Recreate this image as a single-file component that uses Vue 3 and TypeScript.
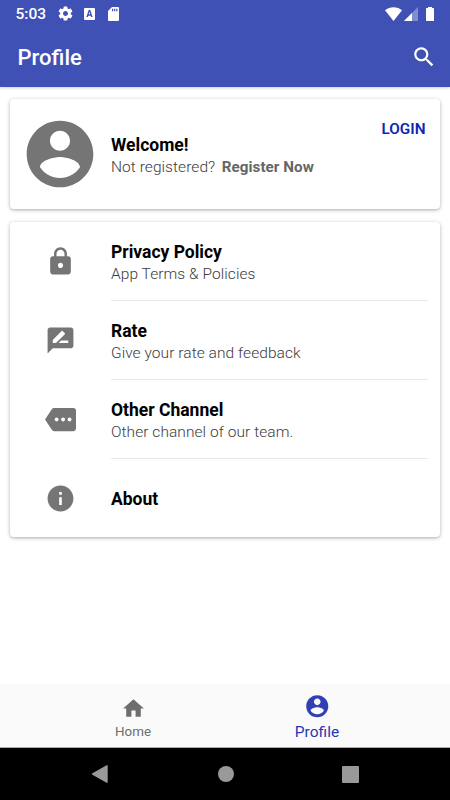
<script setup lang="ts">
interface MenuItem {
  title: string
  subtitle?: string
  icon: string
}

const account =
  'M12 2C6.48 2 2 6.48 2 12s4.48 10 10 10 10-4.48 10-10S17.52 2 12 2zm0 3c1.66 0 3 1.34 3 3s-1.34 3-3 3-3-1.34-3-3 1.34-3 3-3zm0 14.2c-2.5 0-4.71-1.28-6-3.22.03-1.99 4-3.08 6-3.08 1.99 0 5.97 1.09 6 3.08-1.29 1.94-3.5 3.22-6 3.22z'

const items: MenuItem[] = [
  {
    title: 'Privacy Policy',
    subtitle: 'App Terms & Policies',
    icon: 'M18 8h-1V6c0-2.76-2.24-5-5-5S7 3.24 7 6v2H6c-1.1 0-2 .9-2 2v10c0 1.1.9 2 2 2h12c1.1 0 2-.9 2-2V10c0-1.1-.9-2-2-2zm-6 9c-1.1 0-2-.9-2-2s.9-2 2-2 2 .9 2 2-.9 2-2 2zm3.1-9H8.9V6c0-1.71 1.39-3.1 3.1-3.1 1.71 0 3.1 1.39 3.1 3.1v2z',
  },
  {
    title: 'Rate',
    subtitle: 'Give your rate and feedback',
    icon: 'M20 2H4c-1.1 0-1.99.9-1.99 2L2 22l4-4h14c1.1 0 2-.9 2-2V4c0-1.1-.9-2-2-2zM6 14v-2.47l6.88-6.88c.2-.2.51-.2.71 0l1.77 1.77c.2.2.2.51 0 .71L8.47 14H6zm12 0h-7.5l2-2H18v2z',
  },
  {
    title: 'Other Channel',
    subtitle: 'Other channel of our team.',
    icon: 'M22 3H7c-.69 0-1.23.35-1.59.88L0 12l5.41 8.11c.36.53.97.89 1.66.89H22c1.1 0 2-.9 2-2V5c0-1.1-.9-2-2-2zM9 13.5c-.83 0-1.5-.67-1.5-1.5s.67-1.5 1.5-1.5 1.5.67 1.5 1.5-.67 1.5-1.5 1.5zm5 0c-.83 0-1.5-.67-1.5-1.5s.67-1.5 1.5-1.5 1.5.67 1.5 1.5-.67 1.5-1.5 1.5zm5 0c-.83 0-1.5-.67-1.5-1.5s.67-1.5 1.5-1.5 1.5.67 1.5 1.5-.67 1.5-1.5 1.5z',
  },
  {
    title: 'About',
    icon: 'M12 2C6.48 2 2 6.48 2 12s4.48 10 10 10 10-4.48 10-10S17.52 2 12 2zm1 15h-2v-6h2v6zm0-8h-2V7h2v2z',
  },
]
</script>

<template>
  <div class="screen">
    <header class="top">
      <div class="status">
        <span class="clock">5:03</span>
        <svg class="gear" viewBox="0 0 24 24"><path d="M19.43 12.98c.04-.32.07-.64.07-.98s-.03-.66-.07-.98l2.11-1.65c.19-.15.24-.42.12-.64l-2-3.46c-.12-.22-.39-.3-.61-.22l-2.49 1c-.52-.4-1.08-.73-1.69-.98l-.38-2.65C14.46 2.18 14.25 2 14 2h-4c-.25 0-.46.18-.49.42l-.38 2.65c-.61.25-1.17.59-1.69.98l-2.49-1c-.23-.09-.49 0-.61.22l-2 3.46c-.13.22-.07.49.12.64l2.11 1.65c-.04.32-.07.65-.07.98s.03.66.07.98l-2.11 1.65c-.19.15-.24.42-.12.64l2 3.46c.12.22.39.3.61.22l2.49-1c.52.4 1.08.73 1.69.98l.38 2.65c.03.24.24.42.49.42h4c.25 0 .46-.18.49-.42l.38-2.65c.61-.25 1.17-.59 1.69-.98l2.49 1c.23.09.49 0 .61-.22l2-3.46c.12-.22.07-.49-.12-.64l-2.11-1.65zM12 15.5c-1.93 0-3.5-1.57-3.5-3.5s1.57-3.5 3.5-3.5 3.5 1.57 3.5 3.5-1.57 3.5-3.5 3.5z" /></svg>
        <svg class="keyboard" viewBox="0 0 11 12"><path fill-rule="evenodd" d="M1 0h9a1 1 0 0 1 1 1v10a1 1 0 0 1-1 1H1a1 1 0 0 1-1-1V1a1 1 0 0 1 1-1zM4.7 2 2.4 9h1.5l.4-1.3h2.4L7.1 9h1.5L6.3 2zM4.7 6.3l.8-2.5.8 2.5z" /></svg>
        <svg class="sd" viewBox="0 0 11 14"><path fill-rule="evenodd" d="M4 0h6a1 1 0 0 1 1 1v12a1 1 0 0 1-1 1H1a1 1 0 0 1-1-1V4zM4 1.8v2.4h1.2V1.8zM6.1 1.8v2.4h1.2V1.8zM8.2 1.8v2.4h1.2V1.8z" /></svg>
        <span class="grow"></span>
        <svg class="wifi" viewBox="0 0 17 14"><path d="M0 3.2C4.6-.9 12.4-.9 17 3.2L8.5 14z" /></svg>
        <svg class="signal" viewBox="0 0 14 14"><path opacity=".35" d="M14 0v14H0z" /><path d="M8 6v8H0z" /></svg>
        <svg class="battery" viewBox="0 0 8 14"><path d="M2 0h4v1.1h1.4a.6.6 0 0 1 .6.6v11.7a.6.6 0 0 1-.6.6H.6a.6.6 0 0 1-.6-.6V1.7a.6.6 0 0 1 .6-.6H2z" /></svg>
      </div>
      <div class="appbar">
        <h1>Profile</h1>
        <svg class="search" viewBox="0 0 24 24"><path d="M15.5 14h-.79l-.28-.27C15.41 12.59 16 11.11 16 9.5 16 5.91 13.09 3 9.5 3S3 5.91 3 9.5 5.91 16 9.5 16c1.61 0 3.09-.59 4.23-1.57l.27.28v.79l5 4.99L20.49 19l-4.99-5zm-6 0C7.01 14 5 11.99 5 9.5S7.01 5 9.5 5 14 7.01 14 9.5 11.99 14 9.5 14z" /></svg>
      </div>
    </header>

    <main>
      <section class="card account">
        <svg class="avatar" viewBox="0 0 24 24"><path :d="account" /></svg>
        <div class="text">
          <div class="title">Welcome!</div>
          <div class="subtitle"><span class="ask">Not registered?</span><b>Register Now</b></div>
        </div>
        <span class="login">LOGIN</span>
      </section>

      <section class="card">
        <div v-for="item in items" :key="item.title" class="row">
          <div class="icon">
            <svg viewBox="0 0 24 24"><path :d="item.icon" /></svg>
          </div>
          <div class="text">
            <div class="title">{{ item.title }}</div>
            <div v-if="item.subtitle" class="subtitle">{{ item.subtitle }}</div>
          </div>
        </div>
      </section>
    </main>

    <nav class="tabs">
      <div class="tab">
        <svg viewBox="0 0 24 24"><path d="M10 20v-6h4v6h5v-8h3L12 3 2 12h3v8z" /></svg>
        <span>Home</span>
      </div>
      <div class="tab active">
        <svg viewBox="0 0 24 24"><path :d="account" /></svg>
        <span>Profile</span>
      </div>
    </nav>
    <div class="system">
      <svg viewBox="0 0 16 18"><path d="M14.6.2 .4 8.3a.8.8 0 0 0 0 1.4l14.2 8.1a.7.7 0 0 0 1.1-.6V.8a.7.7 0 0 0-1.1-.6z" /></svg>
      <span class="circle"></span>
      <span class="square"></span>
    </div>
  </div>
</template>

<style>
body {
  margin: 0;
}
</style>

<style scoped>
.screen {
  width: 450px;
  height: 800px;
  display: flex;
  flex-direction: column;
  background: #fff;
  color: #000;
  font-family: Roboto, sans-serif;
  overflow: hidden;
}
svg {
  display: block;
  fill: currentColor;
  flex: none;
}
.top {
  height: 87px;
  background: #3f51b5;
  color: #fff;
  box-shadow: 0 1px 3px rgba(0, 0, 0, 0.2);
  flex: none;
}
.status {
  height: 27px;
  display: flex;
  align-items: center;
  padding: 0 16px 0 15.5px;
}
.clock {
  width: 41.5px;
  font-size: 15.5px;
  font-weight: 500;
}
.gear {
  width: 17px;
  height: 17px;
}
.keyboard {
  width: 11px;
  height: 12px;
  margin-left: 10px;
}
.sd {
  width: 11px;
  height: 14px;
  margin-left: 13px;
}
.grow {
  flex: 1;
}
.wifi {
  width: 17px;
  height: 14px;
}
.signal {
  width: 14px;
  height: 14px;
  margin: 0 8px 0 2px;
}
.battery {
  width: 8px;
  height: 14px;
}
.appbar {
  height: 60px;
  display: flex;
  align-items: center;
  justify-content: space-between;
  padding: 0 13.5px 0 17.5px;
}
h1 {
  margin: 2px 0 0;
  font-size: 22px;
  line-height: 28px;
  font-weight: 500;
}
.search {
  width: 26px;
  height: 26px;
}
main {
  flex: 1;
  padding: 12px 10px 0;
}
.card {
  border-radius: 4px;
  background: #fff;
  box-shadow: 0 1px 4px rgba(0, 0, 0, 0.25), 0 1px 2px rgba(0, 0, 0, 0.1);
}
.account {
  height: 110px;
  margin-bottom: 13px;
  display: flex;
  align-items: center;
}
.avatar {
  width: 80px;
  height: 80px;
  margin: 0 11px 0 10px;
  color: #757575;
}
.text {
  flex: 1;
}
.title {
  font-size: 17.5px;
  line-height: 22px;
  font-weight: 700;
}
.subtitle {
  font-size: 15.5px;
  line-height: 22px;
  font-weight: 300;
  letter-spacing: 0.06px;
  color: #3c3c3c;
  white-space: nowrap;
}
.account .text {
  margin-top: 4px;
}
.ask {
  margin-right: 6.5px;
}
.subtitle b {
  font-size: 15.2px;
  font-weight: 700;
  color: #666;
}
.login {
  align-self: flex-start;
  margin: 21px 14.5px 0 0;
  font-size: 15.3px;
  line-height: 18px;
  font-weight: 600;
  color: #1226ae;
}
.row {
  height: 79px;
  display: flex;
}
.row:last-child {
  height: 78px;
}
.icon {
  width: 101px;
  display: flex;
  align-items: center;
  justify-content: center;
  color: #757575;
}
.icon svg {
  width: 31px;
  height: 31px;
}
.row .text {
  display: flex;
  flex-direction: column;
  justify-content: center;
  margin-right: 12px;
  padding-top: 4px;
  box-sizing: border-box;
  border-bottom: 1px solid #e8e8e8;
}
.row:last-child .text {
  padding-top: 3px;
  border-bottom-color: transparent;
}
.tabs {
  height: 63px;
  display: flex;
  justify-content: center;
  background: #fafafa;
  border-bottom: 1px solid #aaa;
}
.tab {
  width: 184px;
  display: flex;
  flex-direction: column;
  align-items: center;
  color: #6e6e6e;
}
.tab svg {
  width: 25px;
  height: 25px;
  margin-top: 11.5px;
}
.tab span {
  margin-top: 3.5px;
  font-size: 13.4px;
  line-height: 16px;
}
.active svg {
  width: 26.5px;
  height: 26.5px;
  margin-top: 8.5px;
  color: #3040b4;
}
.active span {
  margin-top: 3.5px;
  font-size: 15.5px;
  line-height: 18px;
  color: #2637b5;
}
.system {
  height: 52px;
  background: #000;
  color: #999;
  display: flex;
  align-items: center;
  justify-content: center;
  gap: 108px;
}
.system svg {
  width: 16px;
  height: 18px;
  margin-right: 2px;
}
.circle {
  width: 16px;
  height: 16px;
  border-radius: 50%;
  background: #999;
}
.square {
  width: 17px;
  height: 17px;
  border-radius: 1px;
  background: #999;
}
</style>
